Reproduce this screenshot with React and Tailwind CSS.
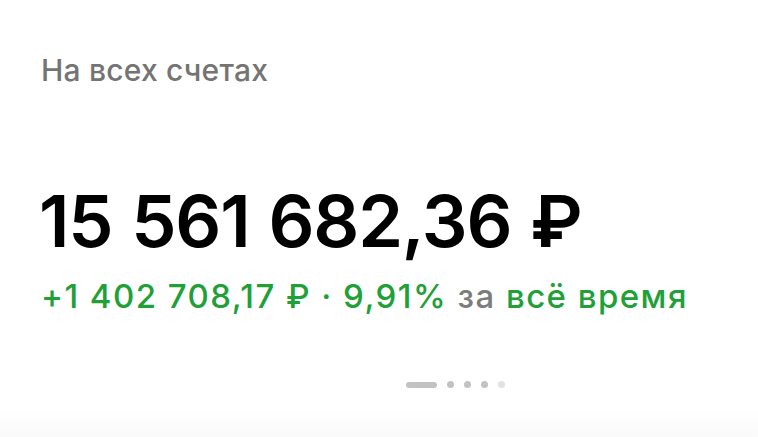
export default function App() {
  return (
    <div className="w-[758px] h-[437px] bg-white flex flex-col overflow-hidden" style={{ fontFamily: 'Inter, "Noto Sans", sans-serif' }}>
      <div className="pl-[41px] pt-[52px] text-[30px] leading-[36px] font-medium text-[#747474] tracking-[0.2px]">
        На всех счетах
      </div>
      <div className="pl-[39px] mt-[93px] text-[72px] leading-[80px] font-semibold text-black tracking-[-1.2px] [word-spacing:2px]">
        15 561 682,36 ₽
      </div>
      <div className="pl-[41px] mt-[15px] text-[33px] leading-[40px] font-medium text-[#21a038] tracking-[1.45px]">
        +1 402 708,17 ₽ · 9,91% <span className="text-[#7c7c7c]">за</span> всё время
      </div>
      <div className="flex items-center gap-[10px] pl-[406px] mt-[65px]">
        <div className="w-[31px] h-[6px] rounded-full bg-[#c2c2c2]" />
        <div className="w-[7px] h-[7px] rounded-full bg-[#c2c2c2]" />
        <div className="w-[7px] h-[7px] rounded-full bg-[#c2c2c2]" />
        <div className="w-[7px] h-[7px] rounded-full bg-[#c2c2c2]" />
        <div className="w-[7px] h-[7px] rounded-full bg-[#e2e2e2]" />
      </div>
      <div className="flex-1 mt-[19px] bg-gradient-to-b from-white to-[#fafafa]" />
    </div>
  );
}
